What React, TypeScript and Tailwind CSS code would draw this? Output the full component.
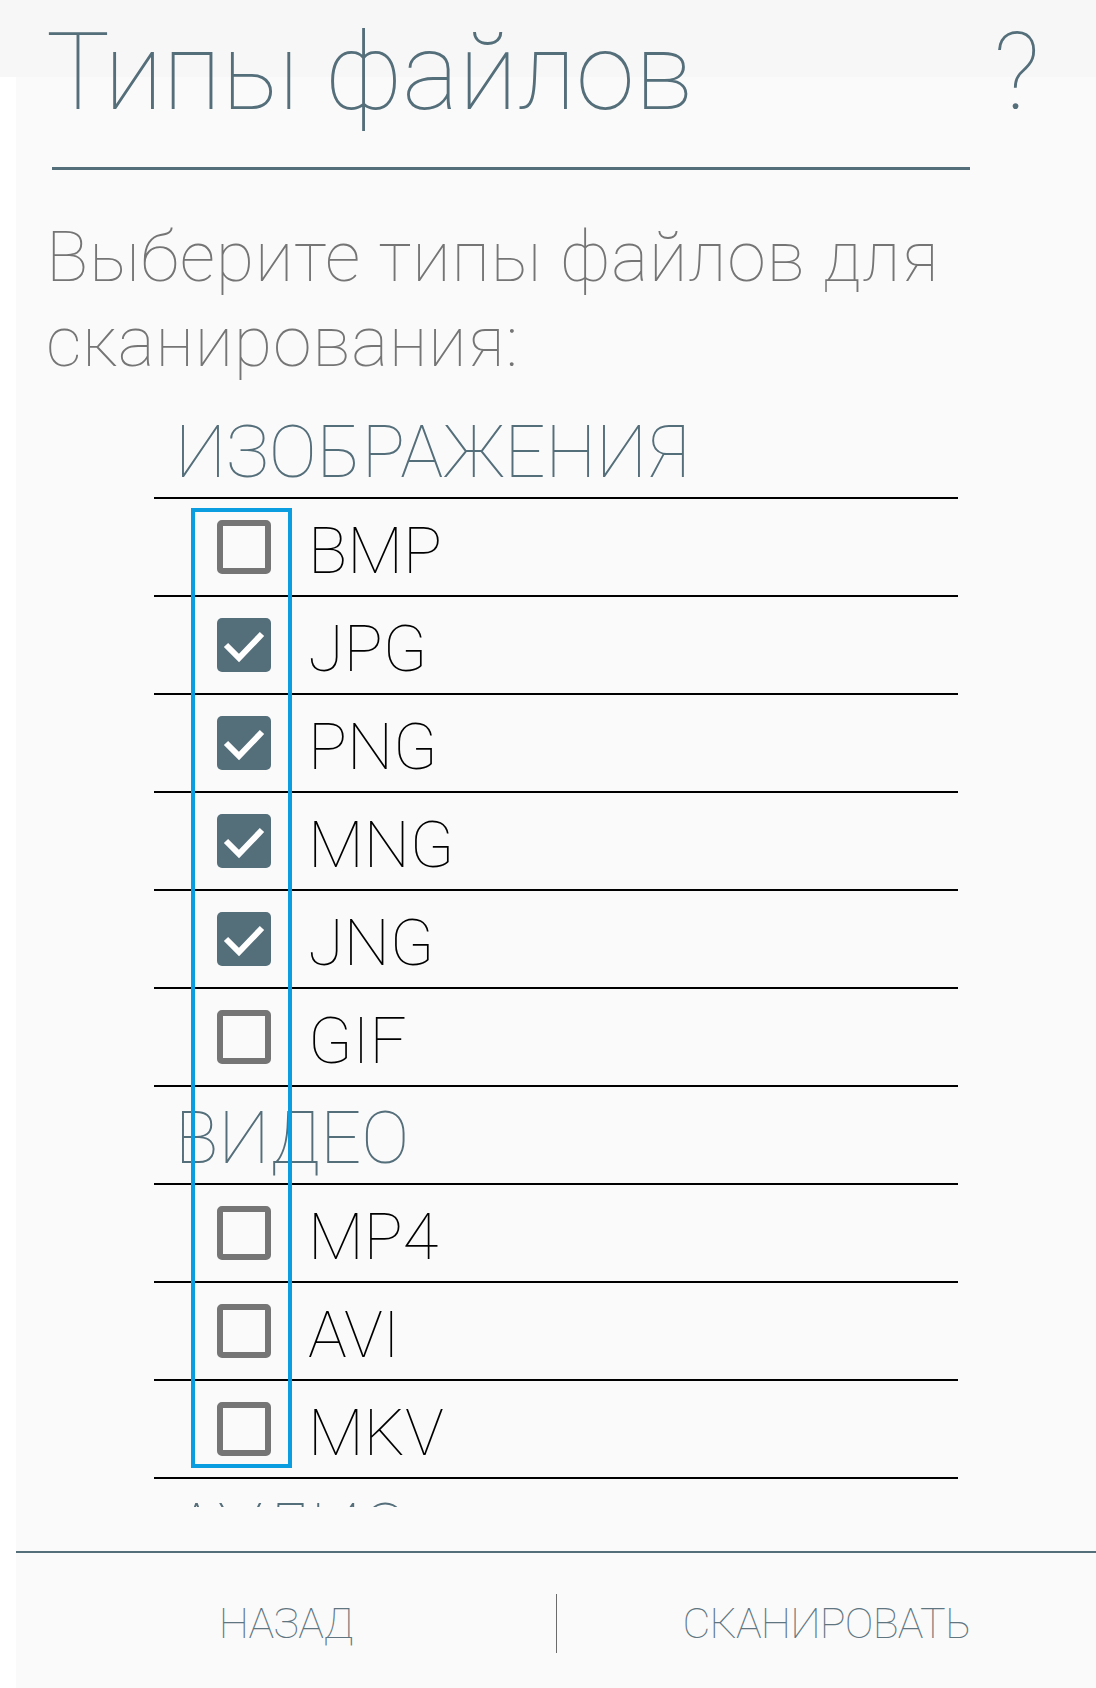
import React from "react";

type Item = { label: string; checked: boolean };
type Section = { title: string; items: Item[] };

const sections: Section[] = [
  {
    title: "ИЗОБРАЖЕНИЯ",
    items: [
      { label: "BMP", checked: false },
      { label: "JPG", checked: true },
      { label: "PNG", checked: true },
      { label: "MNG", checked: true },
      { label: "JNG", checked: true },
      { label: "GIF", checked: false },
    ],
  },
  {
    title: "ВИДЕО",
    items: [
      { label: "MP4", checked: false },
      { label: "AVI", checked: false },
      { label: "MKV", checked: false },
    ],
  },
  {
    title: "АУДИО",
    items: [
      { label: "MP3", checked: false },
      { label: "WAV", checked: false },
    ],
  },
];

function Checkbox({ checked }: { checked: boolean }) {
  if (checked) {
    return (
      <div className="flex h-[54px] w-[54px] shrink-0 items-center justify-center rounded-[5px] bg-[#546e7a]">
        <svg width="54" height="54" viewBox="0 0 54 54" fill="none">
          <polyline
            points="9,27 22,40 45,16"
            stroke="#ffffff"
            strokeWidth="6"
            strokeLinecap="butt"
            strokeLinejoin="miter"
          />
        </svg>
      </div>
    );
  }
  return <div className="h-[54px] w-[54px] shrink-0 rounded-[5px] border-[6px] border-[#757575]" />;
}

function Row({ item }: { item: Item }) {
  return (
    <div className="flex h-[98px] items-center border-b-2 border-black">
      <div className="ml-[63px]">
        <Checkbox checked={item.checked} />
      </div>
      <span className="ml-[37px] pt-2 text-[65px] leading-[80px] font-thin text-black">{item.label}</span>
    </div>
  );
}

function SectionHeader({ title }: { title: string }) {
  return (
    <div className="h-[98px] border-b-2 border-black pl-[21px] pt-[7px]">
      <span className="block text-[72px] leading-[89px] font-thin text-[#546e7a]">{title}</span>
    </div>
  );
}

export default function App() {
  return (
    <div className="h-[1688px] w-full overflow-hidden bg-[linear-gradient(to_bottom,#f7f7f7_77px,#ffffff_77px)] pl-4 font-['Roboto',sans-serif]">
      <div className="flex h-full flex-col bg-[linear-gradient(to_bottom,#f7f7f7_77px,#fafafa_77px)]">
        {/* header */}
        <div className="pl-[30px] pr-[56px] pt-[19px]">
          <div className="flex items-start justify-between">
            <h1 className="text-[107px] leading-[107px] font-thin text-[#546e7a]">Типы файлов</h1>
            <span className="text-[107px] leading-[107px] font-thin text-[#546e7a]">?</span>
          </div>
          <div className="ml-[6px] mt-[41px] h-[3px] w-[918px] bg-[#546e7a]" />
        </div>

        <p className="mt-[45px] w-[980px] pl-[30px] text-[70px] leading-[85px] font-thin tracking-[0.8px] text-[#757575]">
          Выберите типы файлов для сканирования:
        </p>

        {/* list */}
        <div className="relative ml-[138px] mt-4 h-[1106px] w-[804px] overflow-hidden">
          {sections.map((s) => (
            <div key={s.title}>
              <SectionHeader title={s.title} />
              {s.items.map((it) => (
                <Row key={it.label} item={it} />
              ))}
            </div>
          ))}
          <div className="absolute left-[37px] top-[107px] h-[960px] w-[101px] border-4 border-[#0a9ee0]" />
        </div>

        {/* footer */}
        <div className="mt-auto h-[137px] border-t-2 border-[#546e7a]">
          <div className="flex h-full items-center pt-[6px]">
            <button className="flex-1 text-center text-[43px] leading-[43px] font-thin tracking-[-0.8px] text-[#5f7580]">
              НАЗАД
            </button>
            <div className="h-[59px] w-px bg-[#6b6b6b]" />
            <button className="flex-1 text-center text-[43px] leading-[43px] font-thin tracking-[-0.8px] text-[#5f7580]">
              СКАНИРОВАТЬ
            </button>
          </div>
        </div>
      </div>
    </div>
  );
}
